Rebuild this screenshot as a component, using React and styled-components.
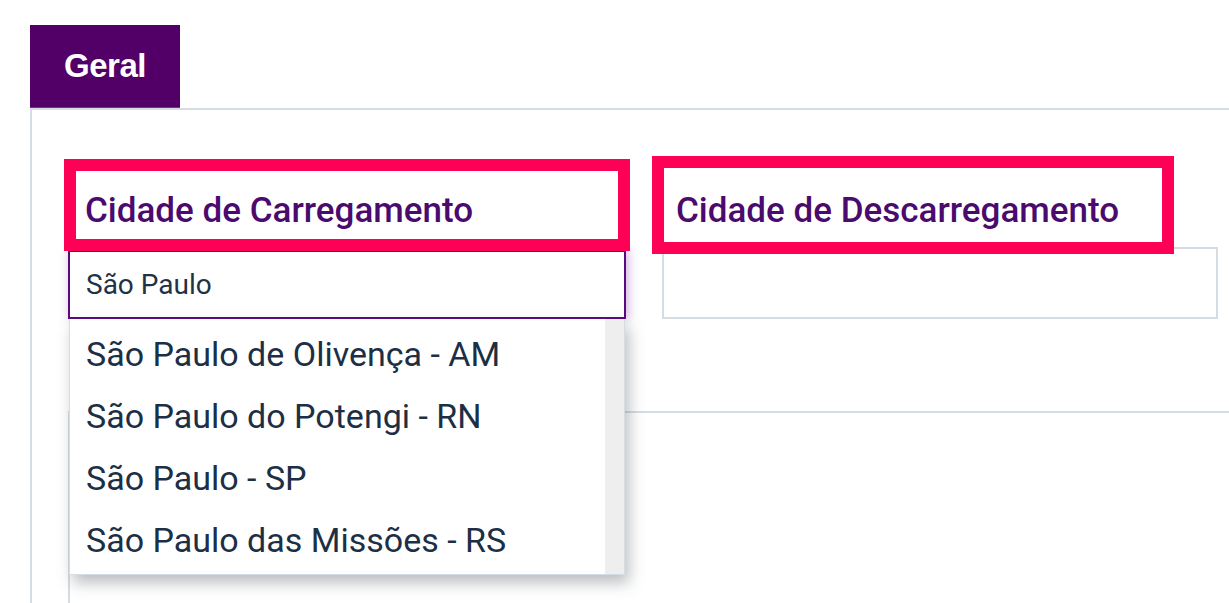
import React from "react";
import styled, { createGlobalStyle } from "styled-components";

const GlobalStyle = createGlobalStyle`
  body {
    margin: 0;
    background: #ffffff;
    overflow: hidden;
    font-family: Roboto, "Liberation Sans", sans-serif;
  }
`;

const cities = [
  "São Paulo de Olivença - AM",
  "São Paulo do Potengi - RN",
  "São Paulo - SP",
  "São Paulo das Missões - RS",
];

const App = () => {
  return (
    <>
      <GlobalStyle />
      <Page>
        <TabBar>
          <Tab>Geral</Tab>
        </TabBar>
        <Panel>
          <FieldRow>
            <Field $width={558}>
              <Label $left={-4} $right={-4} $top={3} $height={92} $overlap={1} $padTop={20} $padLeft={9}>
                Cidade de Carregamento
              </Label>
              <InputWrap>
                <Input $focused readOnly defaultValue="São Paulo" />
                <Dropdown>
                  <OptionList>
                    {cities.map((city, i) => (
                      <Option key={i}>{city}</Option>
                    ))}
                  </OptionList>
                  <ScrollTrack />
                </Dropdown>
              </InputWrap>
            </Field>
            <Field $width={556}>
              <Label $left={-10} $right={44} $top={0} $height={98} $overlap={7} $padTop={23} $padLeft={12}>
                Cidade de Descarregamento
              </Label>
              <Input readOnly defaultValue="" />
            </Field>
          </FieldRow>
          <Section />
        </Panel>
      </Page>
    </>
  );
};

export default App;

const Page = styled.div`
  box-sizing: border-box;
  width: 100vw;
  height: 100vh;
  overflow: hidden;
  padding: 25px 0 0 30px;
`;

const TabBar = styled.div`
  display: flex;
`;

const Tab = styled.div`
  width: 150px;
  height: 82px;
  display: flex;
  align-items: center;
  justify-content: center;
  background: #520068;
  border-bottom: 1px solid #a0207a;
  color: #ffffff;
  font-size: 33px;
  font-weight: 700;
  font-family: "Liberation Sans", Arial, sans-serif;
  letter-spacing: -0.5px;
`;

const Panel = styled.div`
  width: 1300px;
  height: 600px;
  border-top: 2px solid #d5dde2;
  border-left: 2px solid #d5dde2;
  padding: 46px 0 0 36px;
`;

const FieldRow = styled.div`
  display: flex;
  gap: 36px;
  align-items: flex-start;
`;

const Field = styled.div`
  width: ${(p) => p.$width}px;
  display: flex;
  flex-direction: column;
`;

const Label = styled.div`
  position: relative;
  z-index: 2;
  box-sizing: border-box;
  height: ${(p) => p.$height}px;
  margin: ${(p) => p.$top}px ${(p) => p.$right}px -${(p) => p.$overlap}px ${(p) => p.$left}px;
  padding: ${(p) => p.$padTop}px 0 0 ${(p) => p.$padLeft}px;
  border: 12px solid #ff0057;
  color: #4b0a6e;
  font-size: 35px;
  line-height: 40px;
  font-weight: 500;
  white-space: nowrap;
`;

const InputWrap = styled.div`
  position: relative;
`;

const Input = styled.input`
  box-sizing: border-box;
  display: block;
  width: 100%;
  height: ${(p) => (p.$focused ? 69 : 72)}px;
  padding: 0 16px;
  border: 2px solid ${(p) => (p.$focused ? "#5a0a7e" : "#d5dde2")};
  border-radius: 0;
  outline: none;
  background: #ffffff;
  color: #1f3246;
  font-family: Roboto, "Liberation Sans", sans-serif;
  font-size: 28px;
  box-shadow: ${(p) => (p.$focused ? "2px 0 10px rgba(110, 20, 150, 0.35)" : "none")};
`;

const Dropdown = styled.div`
  position: absolute;
  z-index: 3;
  top: 100%;
  left: 1px;
  width: 556px;
  display: flex;
  box-sizing: border-box;
  background: #ffffff;
  border: 1px solid #d5dde2;
  border-top: none;
  box-shadow: 4px 8px 14px rgba(60, 70, 80, 0.35);
`;

const OptionList = styled.div`
  flex: 1;
  padding: 4px 0 3px;
`;

const Option = styled.div`
  height: 62px;
  line-height: 62px;
  padding-left: 16px;
  color: #1c2f45;
  font-size: 34px;
  white-space: nowrap;
`;

const ScrollTrack = styled.div`
  width: 19px;
  background: #eeeeee;
`;

const Section = styled.div`
  margin-top: 92px;
  height: 300px;
  border-top: 2px solid #d5dde2;
  border-left: 2px solid #d5dde2;
`;
